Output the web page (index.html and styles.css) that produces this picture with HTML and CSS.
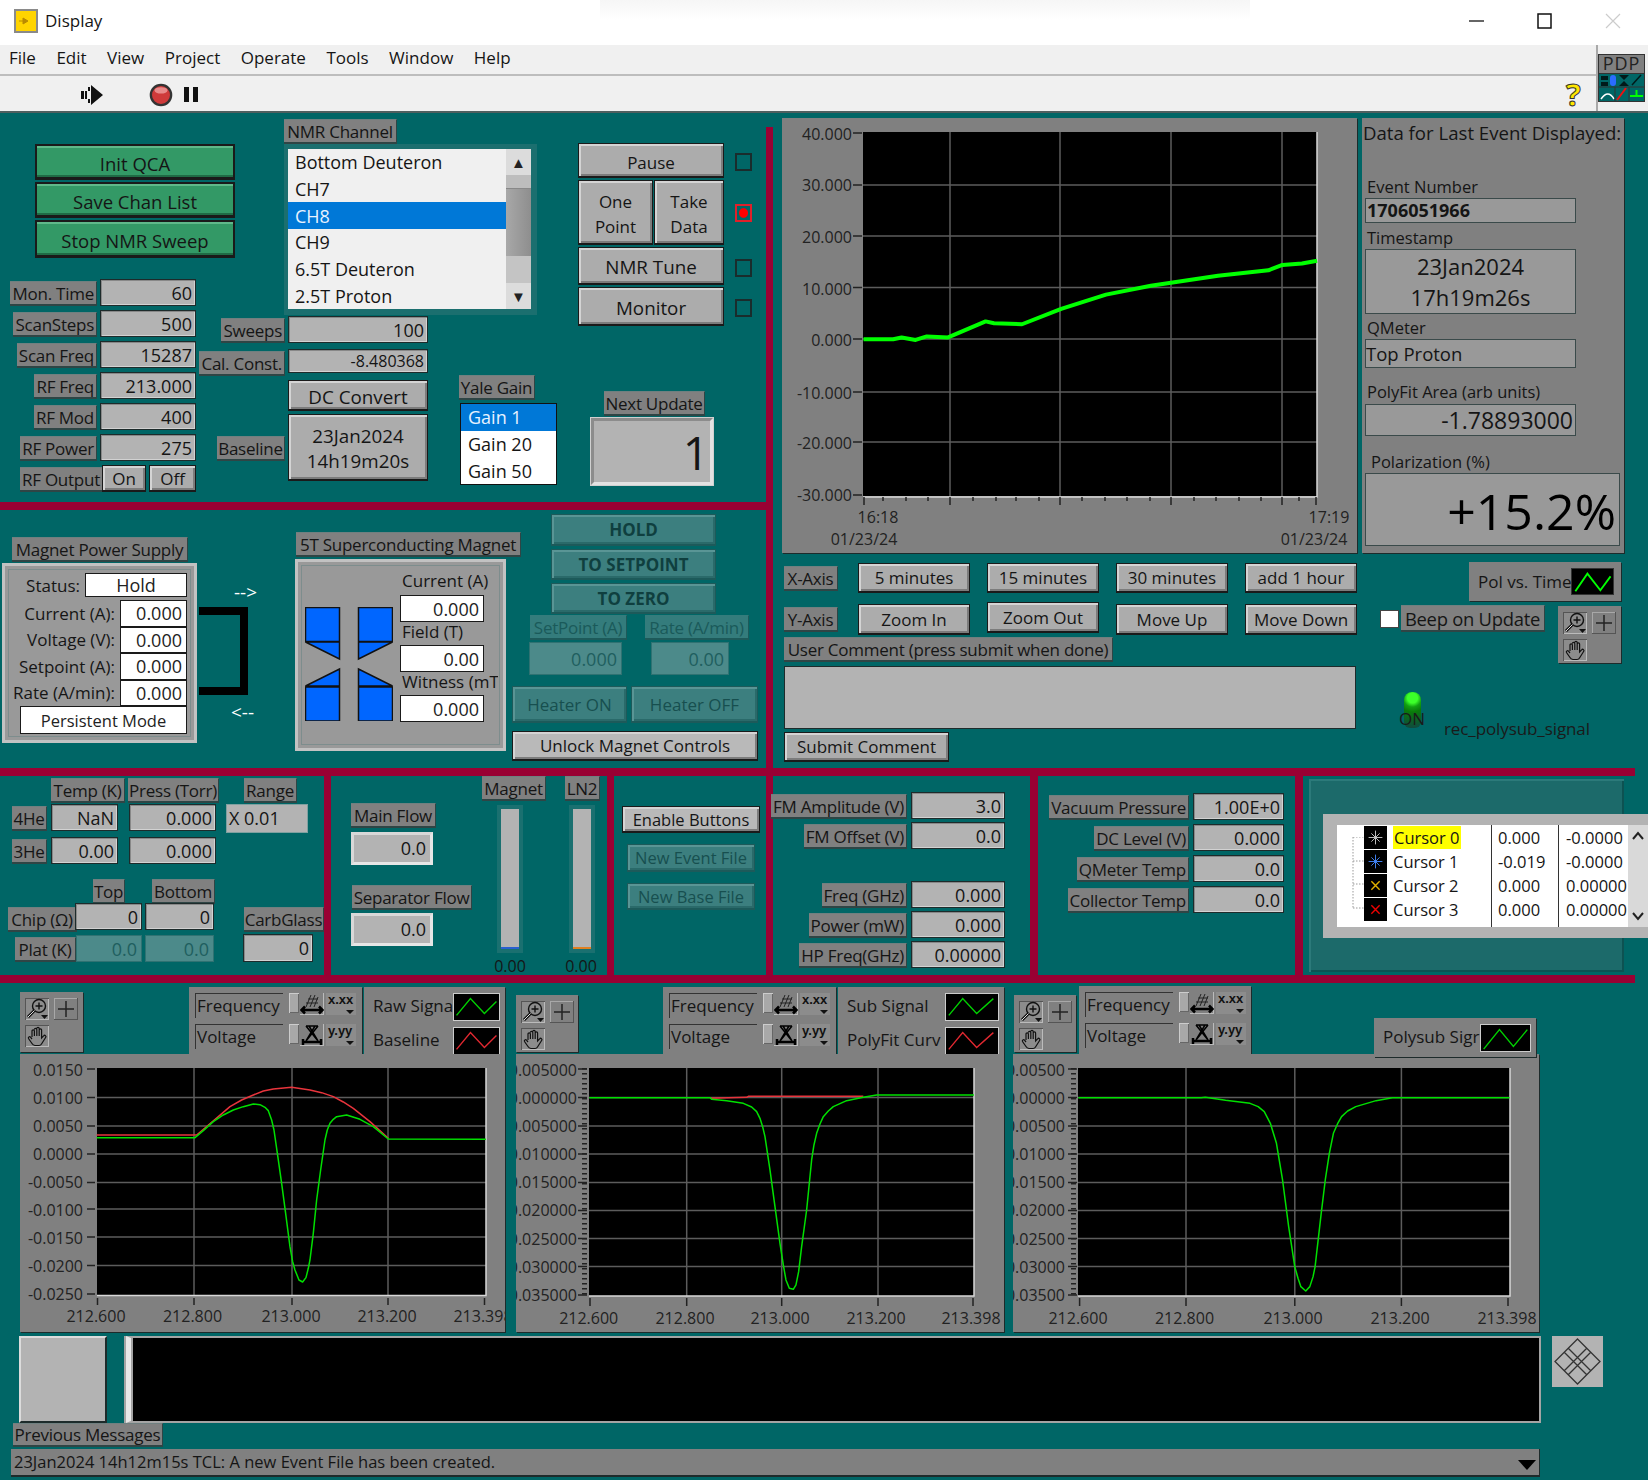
FILE: index.html
```html
<!DOCTYPE html>
<html lang="en">
<head>
    <meta charset="UTF-8">
    <title>Display</title>
    <link rel="stylesheet" href="styles.css">
</head>
<body>
    <svg class="defs" aria-hidden="true">
        <symbol id="icoZoom" viewBox="0 0 24 22">
            <circle cx="14" cy="8" r="6.5" fill="none" stroke="#111" stroke-width="1.4"/>
            <path d="M14 4.5v7M10.5 8h7" stroke="#111" stroke-width="1.4"/>
            <path d="M9.5 12.5L3 19" stroke="#111" stroke-width="3"/>
            <path d="M9.5 12.5L3 19" stroke="#ddd" stroke-width="1"/>
            <path d="M16 17h7l-3.500 4z" fill="#111"/>
        </symbol>
        <symbol id="icoHand" viewBox="0 0 24 22">
            <path d="M7 12V6a1.200 1.200 0 0 1 2.400 0v5M9.400 4.500a1.200 1.200 0 0 1 2.400 0V11M11.800 3.500a1.200 1.200 0 0 1 2.400 0V11M14.200 5a1.200 1.200 0 0 1 2.400 0v8l2-2.200a1.300 1.300 0 0 1 2 1.700L16.500 19a3 3 0 0 1-2.500 1.500h-4A4 4 0 0 1 7 18.500L3.500 13.500a1.200 1.200 0 0 1 2-1.300L7 14" fill="none" stroke="#111" stroke-width="1.200"/>
        </symbol>
        <symbol id="icoPlus" viewBox="0 0 24 22">
            <path d="M12 3v16M4 11h16" stroke="#222" stroke-width="1.500"/>
        </symbol>
        <symbol id="icoScaleX" viewBox="0 0 24 22">
            <path d="M2 17h20M5 13.500L1.500 17 5 20.500M19 13.500l3.500 3.500-3.500 3.500" fill="none" stroke="#000" stroke-width="2.500"/>
            <path d="M6 14l5-12M10 14l5-12M14 14l4-10M8 6h10M6 10h12" fill="none" stroke="#222" stroke-width="1"/>
        </symbol>
        <symbol id="icoScaleY" viewBox="0 0 24 22">
            <path d="M6 2h12M6 2l12 15M18 2L6 17M9 2l9 15M15 2L6 17" fill="none" stroke="#000" stroke-width="1.500"/>
            <path d="M2 18h20M3 15v6M21 15v6" fill="none" stroke="#000" stroke-width="2.500"/>
        </symbol>
        <symbol id="icoChevUp" viewBox="0 0 14 10">
            <path d="M2 8l5-6 5 6" fill="none" stroke="#222" stroke-width="2"/>
        </symbol>
        <symbol id="icoChevDown" viewBox="0 0 14 10">
            <path d="M2 2l5 6 5-6" fill="none" stroke="#222" stroke-width="2"/>
        </symbol>
    </svg>

    <header class="titlebar">
        <svg class="appicon" viewBox="0 0 24 24">
            <rect x="1" y="1" width="22" height="22" fill="#ffd400" stroke="#8a8a8a" stroke-width="2"/>
            <path d="M9 9l5 3-5 3zM5 12h4" fill="#b98a00" stroke="#b98a00"/>
        </svg>
        <span class="apptitle">Display</span>
        <div class="winbtns">
            <svg class="winbtn" viewBox="0 0 16 16"><path d="M0 8h15" stroke="#333" stroke-width="1.500"/></svg>
            <svg class="winbtn" viewBox="0 0 16 16"><rect x="1" y="1" width="13" height="14" fill="none" stroke="#111" stroke-width="1.500"/></svg>
            <svg class="winbtn" viewBox="0 0 16 16"><path d="M1 1l14 14M15 1L1 15" stroke="#ccc" stroke-width="1.200"/></svg>
        </div>
    </header>
    <nav class="menubar">
        <span>File</span><span>Edit</span><span>View</span><span>Project</span><span>Operate</span><span>Tools</span><span>Window</span><span>Help</span>
    </nav>
    <div class="toolbar">
        <svg class="tool-run" viewBox="0 0 24 20">
            <path d="M8 2h2v4h-2zM1 6h3v8H1zM5 6h2v8H5zM8 14h2v4H8zM11 0l12 10-12 10z" fill="#111"/>
        </svg>
        <svg class="tool-stop" viewBox="0 0 26 26">
            <circle cx="13" cy="13" r="11" fill="#cf3a3a" stroke="#333" stroke-width="2.500"/>
            <ellipse cx="13" cy="8" rx="7" ry="3.500" fill="#e88a8a"/>
        </svg>
        <div class="tool-pause"><i></i><i></i></div>
        <span class="tool-help">?</span>
        <div class="tool-side"></div>
    </div>
    <svg class="pdp" viewBox="0 0 47 48">
        <rect width="47" height="48" fill="#333"/>
        <rect x="1" y="1" width="45" height="18" fill="#808080"/>
        <text x="23.500" y="16" class="pdp-text">PDP</text>
        <rect x="1" y="20" width="45" height="27" fill="#006666"/>
        <path d="M3 22h7v4H3zM3 28h7v4H3z" fill="#001a1a"/>
        <rect x="12" y="21" width="6" height="11" rx="3" fill="#2b6cff"/>
        <path d="M21 21h10l-5 5zM21 32h10l-5-5z" fill="#001a1a"/>
        <path d="M34 31l9-10" stroke="#001a1a" stroke-width="1.500"/>
        <path d="M3 45q7-10 13 0" fill="none" stroke="#fff" stroke-width="1.500"/>
        <path d="M19 46l9-12" stroke="#e11" stroke-width="2"/>
        <path d="M32 42h13M38.500 42v-6" stroke="#0f0" stroke-width="2"/>
        <path d="M17 33v14M31 33v14M1 33h45" stroke="#333"/>
    </svg>

    <!-- maroon dividers -->
    <div class="bar bar-v0"></div>
    <div class="bar bar-h1"></div>
    <div class="bar bar-h2"></div>
    <div class="bar bar-h3"></div>
    <div class="bar bar-v1"></div>
    <div class="bar bar-v2"></div>
    <div class="bar bar-v3"></div>
    <div class="bar bar-v4"></div>

    <!-- NMR block -->
    <div class="ctl qca">
        <button class="btn green">Init QCA</button>
        <button class="btn green">Save Chan List</button>
        <button class="btn green">Stop NMR Sweep</button>
    </div>

    <div class="ctl lab nmr-lab">NMR Channel</div>
    <div class="ctl listframe">
        <div class="list nmr-list">
            <div>Bottom Deuteron</div>
            <div>CH7</div>
            <div class="sel">CH8</div>
            <div>CH9</div>
            <div>6.5T Deuteron</div>
            <div>2.5T Proton</div>
        </div>
        <div class="scroll">
            <div class="sc-arrow">▲</div>
            <div class="sc-light"></div>
            <div class="sc-track"></div>
            <div class="sc-light2"></div>
            <div class="sc-arrow">▼</div>
        </div>
    </div>

    <div class="ctl runbtns">
        <button class="btn">Pause</button>
        <div class="runpair">
            <button class="btn">One<br>Point</button>
            <button class="btn">Take<br>Data</button>
        </div>
        <button class="btn big">NMR Tune</button>
        <button class="btn big">Monitor</button>
    </div>
    <div class="ctl led led1"></div>
    <div class="ctl led led2 on"></div>
    <div class="ctl led led3"></div>
    <div class="ctl led led4"></div>

    <div class="ctl rows mon">
        <div class="row"><span class="lab">Mon. Time</span><span class="num">60</span></div>
        <div class="row"><span class="lab">ScanSteps</span><span class="num">500</span></div>
        <div class="row"><span class="lab">Scan Freq</span><span class="num">15287</span></div>
        <div class="row"><span class="lab">RF Freq</span><span class="num">213.000</span></div>
        <div class="row"><span class="lab">RF Mod</span><span class="num">400</span></div>
        <div class="row"><span class="lab">RF Power</span><span class="num">275</span></div>
        <div class="row"><span class="lab rf-out">RF Output</span><button class="btn on-btn">On</button><button class="btn off-btn">Off</button></div>
    </div>

    <div class="ctl rows sweeps">
        <div class="row"><span class="lab">Sweeps</span><span class="num">100</span></div>
        <div class="row"><span class="lab">Cal. Const.</span><span class="num small">-8.480368</span></div>
    </div>
    <div class="ctl dc">
        <button class="btn big">DC Convert</button>
        <button class="btn big">23Jan2024<br>14h19m20s</button>
    </div>
    <div class="ctl lab base-lab">Baseline</div>

    <div class="ctl lab yale-lab">Yale Gain</div>
    <div class="ctl list yale-list">
        <div class="sel">Gain 1</div>
        <div>Gain 20</div>
        <div>Gain 50</div>
    </div>
    <div class="ctl lab next-lab">Next Update</div>
    <div class="ctl next-box">1</div>

    <!-- time chart -->
    <svg class="ctl chart" viewBox="782 118 575 435">
        <rect x="782" y="118" width="575" height="435" fill="#808080"/>
        <rect x="863" y="132" width="454" height="364" fill="#000"/>
        <path class="gridline" d="M950 132V496M1060 132V496M1171 132V496M1282 132V496M863 185H1317M863 236H1317M863 287.500H1317M863 339H1317M863 392H1317M863 442H1317"/>
        <path class="edge" d="M1317 132V497H863"/>
        <g class="ax-r">
            <text x="852" y="140">40.000</text>
            <text x="852" y="191">30.000</text>
            <text x="852" y="243">20.000</text>
            <text x="852" y="295">10.000</text>
            <text x="852" y="346">0.000</text>
            <text x="852" y="399">-10.000</text>
            <text x="852" y="449">-20.000</text>
            <text x="852" y="501">-30.000</text>
        </g>
        <path class="tick" d="M853 133H862M853 185H862M853 236H862M853 287.500H862M853 339H862M853 392H862M853 442H862M853 495H862"/>
        <path class="tick" d="M864 497v8M950 497v8M1060 497v8M1171 497v8M1282 497v8M1316 497v8M883 497v4M906 497v4M928 497v4M973 497v4M996 497v4M1016 497v4M1039 497v4M1082 497v4M1105 497v4M1127 497v4M1150 497v4M1194 497v4M1216 497v4M1239 497v4M1261 497v4M1299 497v4"/>
        <g class="ax-m">
            <text x="878" y="523">16:18</text>
            <text x="864" y="545">01/23/24</text>
            <text x="1329" y="523">17:19</text>
            <text x="1314" y="545">01/23/24</text>
        </g>
        <g transform="translate(770 0) scale(.56 .3571)">
            <polyline class="trace-fat" points="167,950 220,950 235,945 260,952 280,942 318,945 385,900 400,905 450,908 520,865 600,825 680,800 800,772 890,757 915,742 950,738 977,730"/>
        </g>
    </svg>

    <div class="ctl datapanel">
        <div class="dp-title">Data for Last Event Displayed:</div>
        <div class="cap cap-event">Event Number</div>
        <div class="dbox dbox-event">1706051966</div>
        <div class="cap cap-time">Timestamp</div>
        <div class="dbox dbox-time">23Jan2024<br>17h19m26s</div>
        <div class="cap cap-qm">QMeter</div>
        <div class="dbox dbox-qm">Top Proton</div>
        <div class="cap cap-area">PolyFit Area (arb units)</div>
        <div class="dbox dbox-area">-1.78893000</div>
        <div class="cap cap-pol">Polarization (%)</div>
        <div class="dbox dbox-pol">+15.2%</div>
    </div>

    <div class="ctl lab xaxis-lab">X-Axis</div>
    <div class="ctl lab yaxis-lab">Y-Axis</div>
    <div class="ctl axbtns axbtns-x">
        <button class="btn">5 minutes</button>
        <button class="btn">15 minutes</button>
        <button class="btn">30 minutes</button>
        <button class="btn">add 1 hour</button>
    </div>
    <div class="ctl axbtns axbtns-y">
        <button class="btn">Zoom In</button>
        <button class="btn zoomout">Zoom Out</button>
        <button class="btn">Move Up</button>
        <button class="btn">Move Down</button>
    </div>
    <div class="ctl lab comment-lab">User Comment (press submit when done)</div>
    <div class="ctl comment-box"></div>
    <button class="ctl btn submit">Submit Comment</button>

    <div class="ctl legend pol-legend">
        <span class="legend-name">Pol vs. Time</span>
        <svg class="swatch pol-swatch" viewBox="0 0 43 27"><polyline points="3,24 16,5 30,23 41,8" fill="none" stroke="#0f0" stroke-width="2"/></svg>
    </div>
    <div class="ctl check"></div>
    <div class="ctl lab beep-lab">Beep on Update</div>
    <div class="ctl palette pal-pol">
        <span class="palbtn down"><svg><use href="#icoZoom"/></svg></span>
        <span class="palbtn"><svg><use href="#icoPlus"/></svg></span>
        <span class="palbtn down"><svg><use href="#icoHand"/></svg></span>
    </div>
    <div class="ctl green-led"></div>
    <div class="ctl on-text">ON</div>
    <div class="ctl rec-text">rec_polysub_signal</div>

    <!-- magnet block -->
    <div class="ctl lab ps-lab">Magnet Power Supply</div>
    <div class="ctl frame ps-box">
        <div class="ps-row ps-status"><span>Status:</span><span class="wbox ps-hold">Hold</span></div>
        <div class="ps-row"><span>Current (A):</span><span class="wbox">0.000</span></div>
        <div class="ps-row"><span>Voltage (V):</span><span class="wbox">0.000</span></div>
        <div class="ps-row"><span>Setpoint (A):</span><span class="wbox">0.000</span></div>
        <div class="ps-row"><span>Rate (A/min):</span><span class="wbox">0.000</span></div>
        <div class="wbox ps-mode">Persistent Mode</div>
    </div>
    <div class="ctl bracket"></div>
    <div class="ctl arrow arrow-r">--&gt;</div>
    <div class="ctl arrow arrow-l">&lt;--</div>

    <div class="ctl lab sc-lab">5T Superconducting Magnet</div>
    <div class="ctl frame sc-box">
        <svg class="coils" viewBox="305 607 88 114">
            <path class="coil" d="M305.500 607.500h34v34h-34zM305.500 642h34v17zM358.500 607.500h34v34h-34zM392.500 642h-34v17zM305.500 687h34v34h-34zM305.500 686h34v-17zM358.500 687h34v34h-34zM392.500 686h-34v-17z"/>
        </svg>
        <div class="sc-col">
            <div class="sc-cap">Current (A)</div>
            <div class="wbox">0.000</div>
            <div class="sc-cap">Field (T)</div>
            <div class="wbox">0.00</div>
            <div class="sc-cap sc-cap-last">Witness (mT</div>
            <div class="wbox">0.000</div>
        </div>
    </div>

    <div class="ctl supply">
        <button class="btn dim strong">HOLD</button>
        <button class="btn dim strong">TO SETPOINT</button>
        <button class="btn dim strong">TO ZERO</button>
    </div>
    <div class="ctl lab dimlab sp-lab">SetPoint (A)</div>
    <div class="ctl lab dimlab rate-lab">Rate (A/min)</div>
    <div class="ctl dimnum sp-num">0.000</div>
    <div class="ctl dimnum rate-num">0.00</div>
    <div class="ctl heaters">
        <button class="btn dim">Heater ON</button>
        <button class="btn dim">Heater OFF</button>
    </div>
    <button class="ctl btn unlock">Unlock Magnet Controls</button>

    <!-- temperature block -->
    <div class="ctl lab t-lab">Temp (K)</div>
    <div class="ctl lab p-lab">Press (Torr)</div>
    <div class="ctl lab range-lab">Range</div>
    <div class="ctl lab he4-lab">4He</div>
    <div class="ctl num t4">NaN</div>
    <div class="ctl num p4">0.000</div>
    <div class="ctl range-box">X 0.01</div>
    <div class="ctl lab he3-lab">3He</div>
    <div class="ctl num t3">0.00</div>
    <div class="ctl num p3">0.000</div>
    <div class="ctl lab top-lab">Top</div>
    <div class="ctl lab bot-lab">Bottom</div>
    <div class="ctl lab chip-lab">Chip (Ω)</div>
    <div class="ctl num chip1">0</div>
    <div class="ctl num chip2">0</div>
    <div class="ctl lab plat-lab">Plat (K)</div>
    <div class="ctl dimnum plat1">0.0</div>
    <div class="ctl dimnum plat2">0.0</div>
    <div class="ctl lab carb-lab">CarbGlass</div>
    <div class="ctl num carb">0</div>

    <!-- flow block -->
    <div class="ctl lab main-lab">Main Flow</div>
    <div class="ctl flowbox main-box">0.0</div>
    <div class="ctl lab sep-lab">Separator Flow</div>
    <div class="ctl flowbox sep-box">0.0</div>
    <div class="ctl lab mag-lab">Magnet</div>
    <div class="ctl lab ln2-lab">LN2</div>
    <div class="ctl tank tank-mag"><div class="tank-fill fill-blue"></div></div>
    <div class="ctl tank tank-ln2"><div class="tank-fill fill-orange"></div></div>
    <div class="ctl tank-val val-mag">0.00</div>
    <div class="ctl tank-val val-ln2">0.00</div>

    <div class="ctl filebtns">
        <button class="btn enable">Enable Buttons</button>
        <button class="btn dim">New Event File</button>
        <button class="btn dim">New Base File</button>
    </div>

    <!-- sweep settings -->
    <div class="ctl rows fm fm1">
        <div class="row"><span class="lab">FM Amplitude (V)</span><span class="num">3.0</span></div>
        <div class="row"><span class="lab">FM Offset (V)</span><span class="num">0.0</span></div>
    </div>
    <div class="ctl rows fm fm2">
        <div class="row"><span class="lab">Freq (GHz)</span><span class="num">0.000</span></div>
        <div class="row"><span class="lab">Power (mW)</span><span class="num">0.000</span></div>
        <div class="row"><span class="lab">HP Freq(GHz)</span><span class="num">0.00000</span></div>
    </div>
    <div class="ctl rows vac">
        <div class="row"><span class="lab">Vacuum Pressure</span><span class="num">1.00E+0</span></div>
        <div class="row"><span class="lab">DC Level (V)</span><span class="num">0.000</span></div>
        <div class="row"><span class="lab">QMeter Temp</span><span class="num">0.0</span></div>
        <div class="row"><span class="lab">Collector Temp</span><span class="num">0.0</span></div>
    </div>

    <div class="ctl cursor-panel"></div>
    <div class="ctl cursor-frame">
        <div class="cursor-table">
            <div class="cur-name"><svg class="cur-ico" viewBox="0 0 25 25"><rect width="25" height="25"/><path d="M12.500 5v15M5 12.500h15M8 8l9 9M17 8l-9 9" stroke="#ccc"/></svg><span class="cur-on">Cursor 0</span></div>
            <div class="cur-x">0.000</div><div class="cur-y">-0.0000</div>
            <div class="cur-name"><svg class="cur-ico" viewBox="0 0 25 25"><rect width="25" height="25"/><path d="M12.500 5v15M5 12.500h15M8 8l9 9M17 8l-9 9" stroke="#48f"/></svg><span>Cursor 1</span></div>
            <div class="cur-x">-0.019</div><div class="cur-y">-0.0000</div>
            <div class="cur-name"><svg class="cur-ico" viewBox="0 0 25 25"><rect width="25" height="25"/><path d="M8 8l9 9M17 8l-9 9" stroke="#e0b000" stroke-width="1.500"/></svg><span>Cursor 2</span></div>
            <div class="cur-x">0.000</div><div class="cur-y">0.00000</div>
            <div class="cur-name"><svg class="cur-ico" viewBox="0 0 25 25"><rect width="25" height="25"/><path d="M8 8l9 9M17 8l-9 9" stroke="#e00" stroke-width="1.500"/></svg><span>Cursor 3</span></div>
            <div class="cur-x">0.000</div><div class="cur-y">0.00000</div>
            <svg class="cur-tree" viewBox="0 0 12 72"><path d="M1 0V71M1 0H12M1 24H12M1 47H12M1 71H12" fill="none" stroke="#999" stroke-dasharray="1.500 1.500"/></svg>
        </div>
        <div class="cur-scroll">
            <svg><use href="#icoChevUp"/></svg>
            <svg><use href="#icoChevDown"/></svg>
        </div>
    </div>

    <!-- waveform graphs -->
    <div class="ctl palette pal1">
        <span class="palbtn down"><svg><use href="#icoZoom"/></svg></span>
        <span class="palbtn"><svg><use href="#icoPlus"/></svg></span>
        <span class="palbtn down"><svg><use href="#icoHand"/></svg></span>
    </div>
    <div class="ctl scale scale1">
        <span class="sc-name">Frequency</span><i class="lock"></i><span class="sc-ico"><svg><use href="#icoScaleX"/></svg></span><span class="sc-fmt">x.xx</span>
        <span class="sc-name">Voltage</span><i class="lock"></i><span class="sc-ico"><svg><use href="#icoScaleY"/></svg></span><span class="sc-fmt">y.yy</span>
    </div>
    <div class="ctl legend plotleg plotleg1">
        <div class="leg-row"><span class="legend-name">Raw Signa</span><svg class="swatch" viewBox="0 0 47 28"><polyline class="sw-green" points="2,23 17,5 32,21 45,8"/></svg></div>
        <div class="leg-row"><span class="legend-name">Baseline</span><svg class="swatch" viewBox="0 0 47 28"><polyline class="sw-red" points="2,23 17,5 32,21 45,8"/></svg></div>
    </div>
    <svg class="ctl graph graph1" viewBox="20 1054 485 278">
        <rect x="20" y="1054" width="485" height="278" fill="#808080"/>
        <rect x="97" y="1068" width="389" height="227" fill="#000"/>
        <path class="gridline" d="M194 1068V1295M292 1068V1295M388 1068V1295M97 1097.500H486M97 1126H486M97 1154H486M97 1182.500H486M97 1209H486M97 1237H486M97 1265.500H486"/>
        <path class="edge" d="M486 1068V1295.500H97"/>
        <g class="ax-r">
            <text x="83" y="1076">0.0150</text>
            <text x="83" y="1104">0.0100</text>
            <text x="83" y="1132">0.0050</text>
            <text x="83" y="1160">0.0000</text>
            <text x="83" y="1188">-0.0050</text>
            <text x="83" y="1216">-0.0100</text>
            <text x="83" y="1244">-0.0150</text>
            <text x="83" y="1272">-0.0200</text>
            <text x="83" y="1300">-0.0250</text>
        </g>
        <path class="tick" d="M87 1069H95M87 1097.500H95M87 1126H95M87 1154H95M87 1182.500H95M87 1209H95M87 1237H95M87 1265.500H95M87 1294H95M97.500 1298v7M194 1298v7M292 1298v7M388 1298v7M484.500 1298v7"/>
        <g class="ax-m">
            <text x="96" y="1322">212.600</text>
            <text x="192.500" y="1322">212.800</text>
            <text x="291" y="1322">213.000</text>
            <text x="387" y="1322">213.200</text>
            <text x="483" y="1322">213.398</text>
        </g>
        <g transform="translate(0 980) scale(.3333)">
            <polyline class="trace-red" points="290,465 590,465 620,440 655,410 690,380 725,360 760,345 790,333 820,327 875,322 930,330 965,338 1000,350 1030,366 1060,385 1110,425 1165,475"/>
            <polyline class="trace-green" points="290,473 585,473 610,452 640,425 670,405 700,390 730,380 760,372 780,374 795,382 805,392 815,420 822,450 835,540 845,610 857,700 870,800 878,845 885,870 897,900 908,906 918,893 925,865 930,840 940,760 950,660 962,570 975,480 982,450 990,430 1000,418 1010,410 1040,405 1080,418 1120,440 1165,477 1458,478"/>
        </g>
    </svg>

    <div class="ctl palette pal2">
        <span class="palbtn down"><svg><use href="#icoZoom"/></svg></span>
        <span class="palbtn"><svg><use href="#icoPlus"/></svg></span>
        <span class="palbtn down"><svg><use href="#icoHand"/></svg></span>
    </div>
    <div class="ctl scale scale2">
        <span class="sc-name">Frequency</span><i class="lock"></i><span class="sc-ico"><svg><use href="#icoScaleX"/></svg></span><span class="sc-fmt">x.xx</span>
        <span class="sc-name">Voltage</span><i class="lock"></i><span class="sc-ico"><svg><use href="#icoScaleY"/></svg></span><span class="sc-fmt">y.yy</span>
    </div>
    <div class="ctl legend plotleg plotleg2">
        <div class="leg-row"><span class="legend-name">Sub Signal</span><svg class="swatch wide" viewBox="0 0 54 28"><polyline class="sw-green" points="2,23 17,5 32,21 50,5"/></svg></div>
        <div class="leg-row"><span class="legend-name">PolyFit Curv</span><svg class="swatch wide" viewBox="0 0 54 28"><polyline class="sw-red" points="2,23 17,5 32,21 50,5"/></svg></div>
    </div>
    <svg class="ctl graph graph2" viewBox="516 1054 488 278">
        <rect x="516" y="1054" width="488" height="278" fill="#808080"/>
        <rect x="589" y="1068" width="385" height="228" fill="#000"/>
        <path class="gridline" d="M686.700 1068V1296M781.700 1068V1296M878 1068V1296M589 1097.500H974M589 1126H974M589 1154H974M589 1182.500H974M589 1210.500H974M589 1238.500H974M589 1266.500H974"/>
        <path class="edge" d="M974 1068V1296H589"/>
        <g class="ax-r">
            <text x="577" y="1076">0.005000</text>
            <text x="577" y="1104">0.000000</text>
            <text x="577" y="1132">-0.005000</text>
            <text x="577" y="1160">-0.010000</text>
            <text x="577" y="1188">-0.015000</text>
            <text x="577" y="1216">-0.020000</text>
            <text x="577" y="1245">-0.025000</text>
            <text x="577" y="1273">-0.030000</text>
            <text x="577" y="1301">-0.035000</text>
        </g>
        <path class="minor" d="M584.500 1068V1296"/>
        <path class="tick" d="M578 1069H587M578 1097.500H587M578 1126H587M578 1154H587M578 1182.500H587M578 1210.500H587M578 1238.500H587M578 1266.500H587M578 1295H587M590 1298v8M686.700 1298v8M781.700 1298v8M878 1298v8M973 1298v8"/>
        <g class="ax-m">
            <text x="588.700" y="1324">212.600</text>
            <text x="685" y="1324">212.800</text>
            <text x="780" y="1324">213.000</text>
            <text x="876" y="1324">213.200</text>
            <text x="971" y="1324">213.398</text>
        </g>
        <g transform="translate(510 980) scale(.3333)">
            <polyline class="trace-red" points="600,355 710,352 715,349 1060,349"/>
            <polyline class="trace-green" points="238,353 600,353 605,358 650,362 700,370 725,381 740,395 750,415 758,440 765,470 780,570 795,680 810,790 820,855 828,900 838,925 850,928 858,915 866,875 875,800 890,690 905,540 912,495 920,460 930,432 940,410 955,393 970,380 1010,362 1060,352 1100,345 1392,345"/>
        </g>
    </svg>

    <div class="ctl palette pal3">
        <span class="palbtn down"><svg><use href="#icoZoom"/></svg></span>
        <span class="palbtn"><svg><use href="#icoPlus"/></svg></span>
        <span class="palbtn down"><svg><use href="#icoHand"/></svg></span>
    </div>
    <div class="ctl scale scale3">
        <span class="sc-name">Frequency</span><i class="lock"></i><span class="sc-ico"><svg><use href="#icoScaleX"/></svg></span><span class="sc-fmt">x.xx</span>
        <span class="sc-name">Voltage</span><i class="lock"></i><span class="sc-ico"><svg><use href="#icoScaleY"/></svg></span><span class="sc-fmt">y.yy</span>
    </div>
    <svg class="ctl graph graph3" viewBox="1013 1054 526 278">
        <rect x="1013" y="1054" width="526" height="278" fill="#808080"/>
        <rect x="1078" y="1068" width="432" height="228" fill="#000"/>
        <path class="gridline" d="M1186 1068V1296M1294.800 1068V1296M1401.400 1068V1296M1078 1097.500H1510M1078 1126H1510M1078 1154H1510M1078 1182.500H1510M1078 1210.500H1510M1078 1238.500H1510M1078 1266.500H1510"/>
        <path class="edge" d="M1510 1068V1296H1078"/>
        <g class="ax-r">
            <text x="1065" y="1076">0.00500</text>
            <text x="1065" y="1104">0.00000</text>
            <text x="1065" y="1132">-0.00500</text>
            <text x="1065" y="1160">-0.01000</text>
            <text x="1065" y="1188">-0.01500</text>
            <text x="1065" y="1216">-0.02000</text>
            <text x="1065" y="1245">-0.02500</text>
            <text x="1065" y="1273">-0.03000</text>
            <text x="1065" y="1301">-0.03500</text>
        </g>
        <path class="minor" d="M1073.500 1068V1296"/>
        <path class="tick" d="M1068 1069H1077M1068 1097.500H1077M1068 1126H1077M1068 1154H1077M1068 1182.500H1077M1068 1210.500H1077M1068 1238.500H1077M1068 1266.500H1077M1068 1295H1077M1079.600 1298v8M1186 1298v8M1294.800 1298v8M1401.400 1298v8M1508 1298v8"/>
        <g class="ax-m">
            <text x="1078" y="1324">212.600</text>
            <text x="1184.500" y="1324">212.800</text>
            <text x="1293" y="1324">213.000</text>
            <text x="1400" y="1324">213.200</text>
            <text x="1507" y="1324">213.398</text>
        </g>
        <g transform="translate(1010 980) scale(.4068 .3333)">
            <polyline class="trace-green" points="168,353 470,353 480,352 530,361 590,370 610,380 625,395 640,430 655,490 670,600 685,740 700,860 708,895 715,920 727,933 737,920 745,890 750,860 765,700 775,600 785,520 795,460 805,432 815,410 830,393 850,380 900,362 940,353 1228,353"/>
        </g>
    </svg>
    <div class="ctl legend plotleg plotleg3">
        <div class="leg-row"><span class="legend-name">Polysub Sigr</span><svg class="swatch mid" viewBox="0 0 51 28"><polyline class="sw-green" points="2,26 19,5 34,23 49,5"/></svg></div>
    </div>

    <!-- messages -->
    <div class="ctl gray-square"></div>
    <div class="ctl msg-screen"></div>
    <svg class="ctl diamond" viewBox="0 0 51 51">
        <rect width="51" height="51" fill="#b3b3b3"/>
        <path d="M25.500 3L48 25.500 25.500 48 3 25.500zM12 16l23 23M16 12l23 23M39 16L16 39M35 12L12 35" fill="none" stroke="#333" stroke-width="1.300"/>
    </svg>
    <div class="ctl lab prev-lab">Previous Messages</div>
    <div class="ctl statusline">
        <span>23Jan2024 14h12m15s TCL: A new Event File has been created.</span>
        <i class="status-arrow"></i>
    </div>
</body>
</html>
```

FILE: styles.css
```css
* {
    box-sizing: border-box;
}

body {
    position: relative;
    margin: 0;
    width: 1648px;
    height: 1480px;
    overflow: hidden;
    background: #006666;
    color: #151515;
    font-family: "Open Sans", "Noto Sans", sans-serif;
    font-size: 17px;
}

button {
    font: inherit;
    color: inherit;
    padding: 0;
}

.defs {
    position: absolute;
    width: 0;
    height: 0;
}

/* window chrome */
.titlebar {
    display: flex;
    align-items: center;
    height: 45px;
    padding: 0 0 4px 14px;
    background: linear-gradient(#f6f6f6, #fff 45%) 600px 0 / 650px 100% no-repeat, #fff;
}

.appicon {
    width: 24px;
    height: 24px;
}

.apptitle {
    margin-left: 7px;
}

.winbtns {
    display: flex;
    gap: 52px;
    margin-left: auto;
    padding-right: 27px;
}

.winbtn {
    width: 16px;
    height: 16px;
}

.menubar {
    display: flex;
    align-items: center;
    gap: 20.500px;
    height: 31px;
    padding: 0 0 4px 9px;
    background: #f0f0f0;
    border-bottom: 2px solid #bdbdbd;
    font-size: 17px;
}

.toolbar {
    position: relative;
    display: flex;
    align-items: center;
    height: 37px;
    padding-top: 2px;
    background: #f0f0f0;
    border-bottom: 2px solid #4f5f5f;
}

.tool-run {
    width: 24px;
    height: 20px;
    margin-left: 80px;
}

.tool-stop {
    width: 24px;
    height: 24px;
    margin-left: 45px;
}

.tool-pause {
    display: flex;
    gap: 4px;
    margin-left: 11px;
}

.tool-pause i {
    width: 5px;
    height: 15px;
    background: #111;
}

.tool-help {
    margin-left: 1368px;
    color: #ffe600;
    font-size: 31px;
    font-weight: 700;
    line-height: 1;
    -webkit-text-stroke: 1px #333;
}

.tool-side {
    position: absolute;
    top: -31px;
    bottom: 0;
    left: 1596px;
    right: 0;
    border-left: 2px solid #a9a9a9;
    background: #f0f0f0;
}

.pdp {
    position: absolute;
    left: 1598px;
    top: 54px;
    width: 47px;
    height: 48px;
}

.pdp-text {
    font-size: 18px;
    letter-spacing: 1px;
    text-anchor: middle;
    fill: #222;
}

/* everything under the toolbar sits on the LabVIEW front panel */
.ctl {
    position: absolute;
}

.bar {
    position: absolute;
    background: #990033;
}

.bar-v0 { left: 766px; top: 127px; width: 7px; height: 856px; }
.bar-h1 { left: 0; top: 502px; width: 773px; height: 8px; }
.bar-h2 { left: 0; top: 768px; width: 1635px; height: 8px; }
.bar-h3 { left: 0; top: 975px; width: 1635px; height: 8px; }
.bar-v1 { left: 324px; top: 768px; width: 7px; height: 215px; }
.bar-v2 { left: 607px; top: 768px; width: 7px; height: 215px; }
.bar-v3 { left: 1030px; top: 768px; width: 8px; height: 215px; }
.bar-v4 { left: 1295px; top: 768px; width: 8px; height: 215px; }

/* shared controls */
.lab {
    display: flex;
    align-items: center;
    justify-content: center;
    height: 25px;
    padding: 0 2px;
    overflow: hidden;
    background: #808080;
    border-right: 1px solid #2f4545;
    border-bottom: 2px solid #2f4545;
    border-top: 1px solid #6f8080;
    letter-spacing: -.25px;
    white-space: nowrap;
}

.num {
    display: flex;
    align-items: center;
    justify-content: flex-end;
    height: 27px;
    padding-right: 3px;
    overflow: hidden;
    background: #b3b3b3;
    border: 1px solid #1d2b2b;
    box-shadow: inset 1px 1px 0 #888, inset -1px -1px 0 #d2d2d2;
    font-size: 18px;
    white-space: nowrap;
}

.num.small {
    height: 24px;
    margin-bottom: 3px;
    font-size: 16px;
}

.btn {
    display: flex;
    align-items: center;
    justify-content: center;
    background: #acacac;
    border: 1px solid #1a1a1a;
    border-bottom-width: 2px;
    box-shadow: inset 2px 2px 0 #d4d4d4, inset -2px -2px 0 #7c7c7c;
    white-space: nowrap;
    line-height: 25px;
}

.btn.big {
    font-size: 18.800px;
}

.btn.green {
    background: #339966;
    box-shadow: inset 0 2px 0 #5fb98a, inset 0 -2px 0 #1f6b45;
    border-width: 2px;
    border-bottom-width: 3px;
    font-size: 18.500px;
}

.btn.dim {
    background: #3c7f7f;
    color: #174f4f;
    border-color: #1d5a5a;
    box-shadow: inset 2px 2px 0 #5a9595, inset -2px -2px 0 #2a6a6a;
}

.btn.strong {
    color: #0f3f3f;
    font-weight: 700;
}

.dimlab {
    background: #347c7c;
    color: #1a5a5a;
    border-color: #1d5a5a;
    border-top-color: #347c7c;
}

.dimnum {
    display: flex;
    align-items: center;
    justify-content: flex-end;
    padding-right: 4px;
    background: #4c8a8a;
    color: #1f5f5f;
    border: 1px solid #2f7272;
    font-size: 18px;
}

.rows {
    display: flex;
    flex-direction: column;
}

.row {
    display: flex;
    align-items: flex-end;
    justify-content: flex-end;
    height: 27px;
}

.list {
    display: grid;
    grid-auto-rows: 1fr;
    font-size: 18px;
}

.list > div {
    display: flex;
    align-items: center;
    padding-left: 7px;
}

.list .sel {
    background: #0078d7;
    color: #e8f2ff;
}

.frame {
    background: #999;
    border: 3px solid #c2c2c2;
    outline: 1px solid #7d8d8d;
    outline-offset: -7px;
}

.wbox {
    display: flex;
    align-items: center;
    justify-content: flex-end;
    padding-right: 4px;
    background: #fff;
    border: 1px solid #1a1a1a;
    color: #222;
    font-size: 18px;
}

/* NMR block */
.qca {
    left: 35px;
    top: 144px;
    width: 200px;
    height: 114px;
    display: grid;
    grid-template-rows: 36px 36px 38px;
    gap: 2px;
}

.qca .btn,
.runbtns .btn,
.dc .btn {
    padding-top: 4px;
}

.nmr-lab { left: 284px; top: 119px; width: 113px; }

.listframe {
    left: 284px;
    top: 144px;
    width: 253px;
    height: 171px;
    display: flex;
    padding: 5px 6px 6px 4px;
    background: #1b6f6f;
}

.nmr-list {
    flex: 1;
    background: #f0f0f0;
}

.scroll {
    display: flex;
    flex-direction: column;
    width: 25px;
    background: #c8c8c8;
}

.sc-arrow {
    height: 26px;
    background: #dcdcdc;
    font-size: 15px;
    line-height: 26px;
    text-align: center;
    color: #222;
}

.sc-light {
    height: 14px;
    background: #bdbdbd;
    border-bottom: 1px solid #888;
}

.sc-track {
    flex: 1;
    background: linear-gradient(90deg, #a8a8a8, #8e8e8e);
}

.sc-light2 {
    height: 27px;
    background: #c4c4c4;
}

.runbtns {
    left: 578px;
    top: 143px;
    width: 146px;
    display: grid;
    grid-template-rows: 35px 65px 38px 39px;
    gap: 2px;
}

.runpair {
    display: grid;
    grid-template-columns: 75px 70px;
    gap: 1px;
}

.led {
    left: 735px;
    width: 17px;
    height: 18px;
    border: 2px solid #1a2c2c;
}

.led1 { top: 153px; }
.led2 { top: 204px; }
.led3 { top: 259px; }
.led4 { top: 299px; }

.led.on {
    border-color: #e0202a;
    background: radial-gradient(#ff0000 0 4px, #006666 5px);
}

.mon {
    left: 0;
    top: 279px;
    width: 196px;
    gap: 4px;
}

.mon .row { gap: 3px; }
.mon .num { width: 96px; }
.mon .rf-out { margin-right: -4px; }
.on-btn { width: 44px; height: 27px; }
.off-btn { width: 47px; height: 27px; }

.sweeps {
    left: 190px;
    top: 316px;
    width: 238px;
    gap: 6px;
}

.sweeps .row { gap: 3px; }
.sweeps .num { width: 140px; }

.dc {
    left: 288px;
    top: 380px;
    width: 140px;
    display: grid;
    grid-template-rows: 31px 67px;
    gap: 3px;
}

.base-lab { left: 217px; top: 436px; width: 68px; }

.yale-lab { left: 459px; top: 375px; width: 76px; }

.yale-list {
    left: 460px;
    top: 403px;
    width: 97px;
    height: 82px;
    background: #fff;
    border: 1px solid #111;
}

.next-lab { left: 604px; top: 391px; width: 101px; }

.next-box {
    left: 591px;
    top: 418px;
    width: 122px;
    height: 67px;
    padding: 0 1px 0 0;
    background: #b3b3b3;
    border: 3px solid;
    border-color: #8c8c8c #e2e2e2 #e2e2e2 #8c8c8c;
    outline: 1px solid #d0d0d0;
    font-size: 46px;
    line-height: 62px;
    text-align: right;
}

/* charts */
.chart { left: 782px; top: 118px; width: 575px; height: 435px; box-shadow: 1px 1px 0 #1d2b2b; }

.gridline {
    fill: none;
    stroke: #5c5c5c;
    stroke-width: 1.500;
}

.edge {
    fill: none;
    stroke: #d8d8d8;
    stroke-width: 1.500;
}

.tick {
    fill: none;
    stroke: #222;
    stroke-width: 1.500;
}

.minor {
    fill: none;
    stroke: #222;
    stroke-width: 5;
    stroke-dasharray: 1.500 3.500;
}

.ax-r text,
.ax-m text {
    font-size: 16px;
    fill: #222;
}

.ax-r { text-anchor: end; }
.ax-m { text-anchor: middle; }

.trace-fat,
.trace-green,
.trace-red {
    fill: none;
    vector-effect: non-scaling-stroke;
    stroke-linejoin: round;
}

.trace-fat { stroke: #00ff00; stroke-width: 4; }
.trace-green { stroke: #00e000; stroke-width: 1.500; }
.trace-red { stroke: #e8343c; stroke-width: 1.500; }

.datapanel {
    left: 1362px;
    top: 118px;
    width: 262px;
    height: 435px;
    display: flex;
    flex-direction: column;
    background: #808080;
    box-shadow: 1px 1px 0 #1d2b2b;
}

.dp-title {
    height: 32px;
    padding-left: 1px;
    font-size: 18.600px;
    line-height: 30px;
    white-space: nowrap;
}

.cap {
    height: 22px;
    margin-left: 5px;
    font-size: 16.500px;
    line-height: 22px;
    white-space: nowrap;
}

.cap-event { margin-top: 26px; }
.cap-time { margin-top: 4px; }
.cap-qm { margin-top: 3px; }
.cap-area { margin-top: 13px; }
.cap-pol { margin-top: 15px; margin-left: 9px; }

.dbox {
    width: 211px;
    margin-left: 3px;
    background: #999;
    border: 1px solid #3a4a4a;
    overflow: hidden;
    white-space: nowrap;
}

.dbox-event { height: 25px; padding-left: 1px; font-weight: 700; font-size: 18px; line-height: 23px; }
.dbox-time { height: 65px; padding-top: 1px; font-size: 22px; line-height: 31px; text-align: center; }
.dbox-qm { height: 29px; font-size: 18.500px; line-height: 27px; }
.dbox-area { height: 32px; margin-top: 1px; padding-right: 2px; font-size: 23px; line-height: 31px; text-align: right; }
.dbox-pol { width: 255px; height: 73px; padding-right: 3px; color: #000; font-size: 50px; line-height: 74px; text-align: right; }

.xaxis-lab { left: 784px; top: 566px; width: 54px; }
.yaxis-lab { left: 784px; top: 607px; width: 54px; }

.axbtns {
    left: 858px;
    width: 499px;
    display: grid;
    grid-template-columns: repeat(4, 112px);
    justify-content: space-between;
}

.axbtns-x { top: 563px; height: 30px; }
.axbtns-y { top: 604px; height: 31px; }
.zoomout { margin-top: -2px; height: 31px; }

.comment-lab { left: 784px; top: 637px; width: 329px; }

.comment-box {
    left: 784px;
    top: 666px;
    width: 572px;
    height: 63px;
    background: #b3b3b3;
    border: 1px solid #1d2b2b;
}

.submit { left: 784px; top: 732px; width: 165px; height: 30px; }

.legend {
    display: flex;
    align-items: center;
    background: #808080;
    box-shadow: 1px 1px 0 #1d2b2b;
}

.legend-name {
    flex: 1;
    overflow: hidden;
    white-space: nowrap;
}

.pol-legend {
    left: 1469px;
    top: 562px;
    width: 152px;
    height: 39px;
    padding-left: 9px;
}

.swatch {
    flex: none;
    width: 47px;
    height: 28px;
    background: #000;
    border: 1px solid #ccc;
}

.swatch.wide { width: 54px; }
.swatch.mid { width: 51px; }

.pol-swatch {
    width: 43px;
    height: 27px;
    margin-right: 7px;
    border: 1px solid #333;
}

.check {
    left: 1380px;
    top: 610px;
    width: 19px;
    height: 18px;
    background: #fff;
    border: 1px solid #444;
}

.beep-lab { left: 1401px; top: 605px; width: 144px; height: 27px; font-size: 18.400px; }

.palette {
    display: grid;
    grid-template-columns: 24px 24px;
    grid-auto-rows: 22px;
    gap: 5px;
    padding: 6px 5px;
    background: #808080;
    box-shadow: 1px 1px 0 #1d2b2b;
}

.palbtn {
    background: #808080;
    box-shadow: inset -1px -1px 0 #555, inset 1px 1px 0 #a8a8a8;
}

.palbtn.down {
    background: #8c8c8c;
    box-shadow: inset 1px 1px 0 #555, inset -1px -1px 0 #bbb;
}

.palbtn svg {
    display: block;
    width: 24px;
    height: 22px;
}

.pal-pol { left: 1558px; top: 606px; width: 63px; height: 57px; }
.pal1 { left: 20px; top: 992px; width: 63px; height: 60px; }
.pal2 { left: 516px; top: 995px; width: 62px; height: 57px; }
.pal3 { left: 1014px; top: 995px; width: 62px; height: 57px; }

.green-led {
    left: 1404px;
    top: 692px;
    width: 17px;
    height: 36px;
    border-radius: 8px 8px 6px 6px;
    background: radial-gradient(circle at 50% 6px, #3cff2a 0 5px, #12a012 9px, #0a7a0a 14px, #104a40 30px);
}

.on-text { left: 1399px; top: 708px; font-size: 17px; line-height: 22px; color: #1a1a1a; }
.rec-text { left: 1444px; top: 718px; font-size: 17px; line-height: 22px; color: #1a1a1a; letter-spacing: -.1px; }

/* magnet block */
.ps-lab { left: 12px; top: 537px; width: 176px; }

.ps-box {
    left: 2px;
    top: 563px;
    width: 195px;
    height: 180px;
    display: flex;
    flex-direction: column;
    padding: 7px 7px 0 0;
}

.ps-row {
    display: flex;
    align-items: center;
    justify-content: flex-end;
    gap: 5px;
    height: 26.500px;
    white-space: nowrap;
}

.ps-row .wbox { width: 67px; height: 26.500px; }

.ps-status { height: 24px; margin-bottom: 3px; }
.ps-row .ps-hold { width: 102px; height: 24px; padding: 0; justify-content: center; }

.ps-mode {
    align-self: flex-end;
    justify-content: center;
    width: 167px;
    height: 28px;
    padding: 0;
    font-size: 16.500px;
}

.bracket {
    left: 199px;
    top: 607px;
    width: 49px;
    height: 88px;
    border: 8px solid #000;
    border-left: none;
}

.arrow {
    color: #fff;
    font-size: 19px;
    line-height: 20px;
}

.arrow-r { left: 234px; top: 582px; }
.arrow-l { left: 231px; top: 702px; }

.sc-lab { left: 296px; top: 532px; width: 225px; }

.sc-box {
    left: 295px;
    top: 559px;
    width: 211px;
    height: 192px;
    display: flex;
    align-items: flex-start;
    padding: 9px 0 0 7px;
}

.coils {
    flex: none;
    width: 88px;
    height: 114px;
    margin-top: 36px;
}

.coil {
    fill: #0066ff;
    stroke: #111;
    stroke-width: 1.500;
}

.sc-col {
    width: 98px;
    margin-left: 7px;
    display: flex;
    flex-direction: column;
    overflow: hidden;
}

.sc-col .wbox {
    width: 84px;
    height: 27px;
    flex: none;
}

.sc-cap {
    height: 24px;
    padding-left: 2px;
    line-height: 20px;
    white-space: nowrap;
}

.sc-cap + .wbox + .sc-cap { height: 23px; line-height: 19px; }
.sc-col .sc-cap-last { height: 25px; line-height: 23px; }

.supply {
    left: 551px;
    top: 514px;
    width: 165px;
    display: grid;
    grid-template-rows: 32px 31px 31px;
    gap: 3px;
}

.sp-lab { left: 530px; top: 615px; width: 97px; }
.rate-lab { left: 645px; top: 615px; width: 104px; }
.sp-num { left: 529px; top: 642px; width: 93px; height: 33px; }
.rate-num { left: 651px; top: 642px; width: 78px; height: 33px; }

.heaters {
    left: 512px;
    top: 686px;
    width: 246px;
    height: 37px;
    display: grid;
    grid-template-columns: 115px 127px;
    gap: 4px;
}

.unlock { left: 512px; top: 731px; width: 246px; height: 30px; background: #b9b9b9; }

/* temperature block */
.t-lab { left: 51px; top: 778px; width: 74px; }
.p-lab { left: 128px; top: 778px; width: 91px; }
.range-lab { left: 244px; top: 778px; width: 53px; }
.he4-lab { left: 12px; top: 806px; width: 35px; }
.he3-lab { left: 12px; top: 839px; width: 35px; }
.t4 { left: 51px; top: 804px; width: 67px; }
.p4 { left: 129px; top: 804px; width: 87px; }
.t3 { left: 51px; top: 837px; width: 67px; }
.p3 { left: 129px; top: 837px; width: 87px; }

.range-box {
    left: 226px;
    top: 804px;
    width: 82px;
    height: 29px;
    padding-left: 2px;
    background: #b3b3b3;
    border: 1px solid #7fa0a0;
    font-size: 18px;
    line-height: 27px;
}

.top-lab { left: 93px; top: 879px; width: 32px; }
.bot-lab { left: 152px; top: 879px; width: 63px; }
.chip-lab { left: 8px; top: 907px; width: 69px; }
.chip1 { left: 75px; top: 903px; width: 67px; }
.chip2 { left: 145px; top: 903px; width: 69px; }
.plat-lab { left: 15px; top: 937px; width: 61px; }
.plat1 { left: 76px; top: 935px; width: 66px; height: 27px; }
.plat2 { left: 145px; top: 935px; width: 69px; height: 27px; }
.carb-lab { left: 244px; top: 907px; width: 80px; }
.carb { left: 243px; top: 934px; width: 70px; height: 28px; }

/* flow block */
.main-lab { left: 351px; top: 803px; width: 85px; }
.sep-lab { left: 352px; top: 885px; width: 120px; }

.flowbox {
    left: 351px;
    width: 82px;
    height: 33px;
    padding-right: 4px;
    background: #b3b3b3;
    border: 3px solid;
    border-color: #d8d8d8 #e6e6e6 #e6e6e6 #d8d8d8;
    font-size: 18px;
    line-height: 27px;
    text-align: right;
}

.main-box { top: 832px; }
.sep-box { top: 913px; }

.mag-lab { left: 482px; top: 776px; width: 64px; }
.ln2-lab { left: 565px; top: 776px; width: 35px; }

.tank {
    top: 805px;
    width: 26px;
    height: 148px;
    display: flex;
    padding: 4px;
    background: #1a7070;
}

.tank-mag { left: 497px; }
.tank-ln2 { left: 569px; }

.tank-fill {
    flex: 1;
    background: #b3b3b3;
}

.fill-blue { border-bottom: 2px solid #2a5fd0; }
.fill-orange { border-bottom: 2px solid #e08020; }

.tank-val {
    top: 955px;
    width: 40px;
    font-size: 16px;
    line-height: 22px;
    text-align: center;
}

.val-mag { left: 490px; }
.val-ln2 { left: 561px; }

.filebtns {
    left: 622px;
    top: 806px;
    width: 138px;
    display: grid;
    grid-template-rows: 27px 28px 27px;
    gap: 11px;
}

.filebtns .btn { font-size: 16.500px; }

.filebtns .dim {
    width: 128px;
    justify-self: center;
}

.enable {
    background: #b9b9b9;
}

/* sweep settings */
.fm { left: 764px; width: 241px; gap: 3px; }
.fm1 { top: 792px; }
.fm2 { top: 881px; }
.fm .row { gap: 4px; }
.fm .num { width: 94px; }

.vac {
    left: 1047px;
    top: 793px;
    width: 237px;
    gap: 4px;
}

.vac .row { gap: 4px; }
.vac .num { width: 91px; }

.cursor-panel {
    left: 1309px;
    top: 779px;
    width: 315px;
    height: 193px;
    background: #1c6a6a;
    box-shadow: inset 2px 2px 0 #2c7a7a, inset -2px -2px 0 #0d5252;
}

.cursor-frame {
    left: 1323px;
    top: 814px;
    width: 325px;
    height: 124px;
    display: flex;
    padding: 11px 0 11px 14px;
    background: #b3b3b3;
}

.cursor-table {
    position: relative;
    display: grid;
    grid-template-columns: 154px 67px 70px;
    grid-auto-rows: 24px;
    align-content: start;
    width: 291px;
    background: #fff;
    font-size: 16.500px;
    white-space: nowrap;
}

.cursor-table > div {
    display: flex;
    align-items: center;
    height: 100%;
}

.cursor-table {
    background: linear-gradient(#333, #333) 154px 0 / 1px 100% no-repeat,
                linear-gradient(#333, #333) 221px 0 / 1px 100% no-repeat,
                #fff;
}

.cur-name {
    padding-left: 26px;
    gap: 5px;
}

.cur-ico {
    width: 25px;
    height: 23px;
}

.cur-tree {
    position: absolute;
    left: 15px;
    top: 12px;
    width: 12px;
    height: 72px;
}

.cur-on {
    padding: 0 1px;
    background: #ffff00;
}

.cur-x {
    padding-left: 7px;
}

.cur-y {
    padding-left: 8px;
    overflow: hidden;
}

.cur-scroll {
    display: flex;
    flex-direction: column;
    justify-content: space-between;
    align-items: center;
    width: 20px;
    padding: 6px 0;
    background: #d9d9d9;
}

.cur-scroll svg {
    width: 14px;
    height: 10px;
}

/* waveform graphs */
.graph { box-shadow: 1px 1px 0 #1d2b2b; }
.graph1 { left: 20px; top: 1054px; width: 485px; height: 278px; }
.graph2 { left: 516px; top: 1054px; width: 488px; height: 278px; }
.graph3 { left: 1013px; top: 1054px; width: 526px; height: 278px; }

.scale {
    display: grid;
    grid-template-columns: 88px 13px 24px 30px;
    grid-auto-rows: 25px;
    align-items: start;
    column-gap: 2px;
    row-gap: 6px;
    padding: 6px 0 0 6px;
    background: #808080;
    box-shadow: 1px 1px 0 #1d2b2b;
}

.scale1 { left: 189px; top: 987px; width: 173px; height: 68px; }
.scale2 { left: 663px; top: 987px; width: 173px; height: 68px; }
.scale3 { left: 1079px; top: 986px; width: 172px; height: 68px; }

.sc-name {
    height: 25px;
    padding-left: 1px;
    border-top: 1px solid #333;
    border-left: 1px solid #333;
    line-height: 24px;
    white-space: nowrap;
}

.lock {
    height: 20px;
    margin-left: 4px;
    width: 10px;
    background: #a8a8a8;
    box-shadow: inset 1px 1px 0 #ccc, inset -1px -1px 0 #666;
}

.sc-ico {
    height: 22px;
    box-shadow: inset -1px -1px 0 #bbb;
}

.sc-ico svg {
    display: block;
    width: 24px;
    height: 22px;
}

.sc-fmt {
    position: relative;
    height: 22px;
    padding-left: 2px;
    background: #8c8c8c;
    color: #111;
    font-family: "Liberation Sans", sans-serif;
    font-size: 13px;
    font-weight: 700;
    line-height: 14px;
}

.sc-fmt::after {
    content: "";
    position: absolute;
    right: 2px;
    bottom: 1px;
    border: 4px solid transparent;
    border-top-color: #111;
    border-bottom: none;
}

.plotleg {
    flex-direction: column;
    align-items: stretch;
    padding: 6px 5px 0 9px;
    gap: 6px;
}

.plotleg1 { left: 364px; top: 987px; width: 141px; height: 73px; }
.plotleg2 { left: 838px; top: 987px; width: 166px; height: 73px; }
.plotleg3 { left: 1374px; top: 1018px; width: 162px; height: 39px; padding-right: 5px; }

.leg-row {
    display: flex;
    align-items: center;
    height: 28px;
}

.leg-row .legend-name {
    padding-bottom: 3px;
}

.sw-green,
.sw-red {
    fill: none;
    stroke-width: 1.500;
}

.sw-green { stroke: #00d000; }
.sw-red { stroke: #e02830; }

/* messages */
.gray-square {
    left: 19px;
    top: 1336px;
    width: 88px;
    height: 87px;
    background: #b3b3b3;
    border: 2px solid #dcdcdc;
    border-right-color: #1d2b2b;
    border-bottom-color: #1d2b2b;
}

.msg-screen {
    left: 126px;
    top: 1336px;
    width: 1415px;
    height: 87px;
    background: #000;
    border: 2px solid #a4a4a4;
    border-left: 5px solid #e8e8e8;
    box-shadow: inset 2px 0 0 #a4a4a4, -2px 0 0 #a4a4a4;
}

.diamond { left: 1552px; top: 1336px; width: 51px; height: 51px; }

.prev-lab { left: 13px; top: 1423px; width: 150px; height: 24px; }

.statusline {
    left: 11px;
    top: 1449px;
    width: 1529px;
    height: 28px;
    padding-left: 3px;
    background: #808080;
    border-bottom: 2px solid #1d2b2b;
    border-right: 1px solid #1d2b2b;
    font-size: 16.500px;
    line-height: 26px;
}

.status-arrow {
    position: absolute;
    right: 3px;
    top: 11px;
    border: 9px solid transparent;
    border-top: 10px solid #000;
    border-bottom: none;
}
```
